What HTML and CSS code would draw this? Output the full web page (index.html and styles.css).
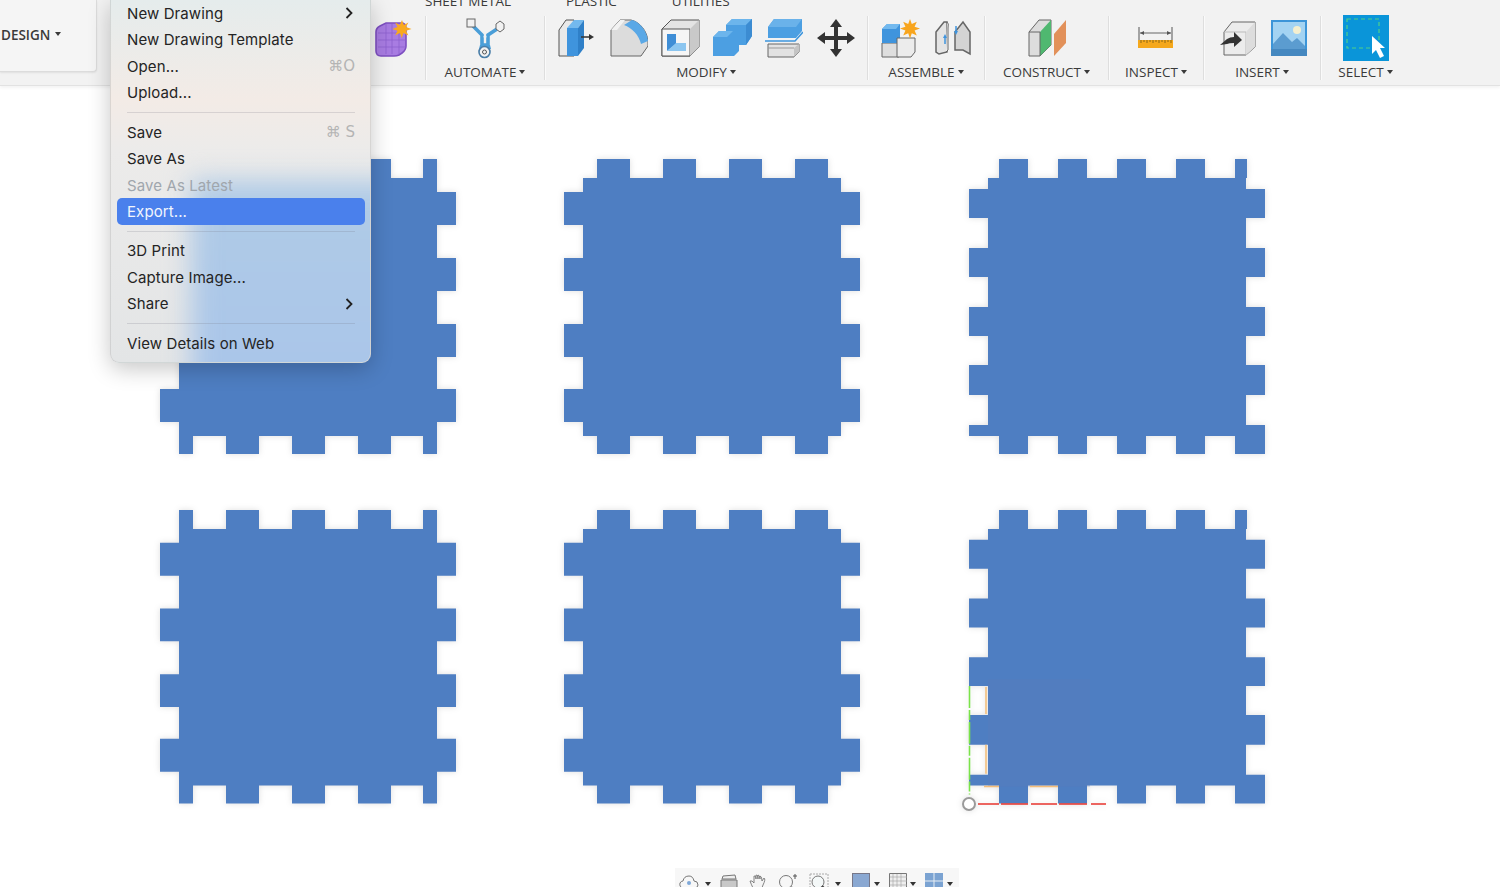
FILE: index.html
```html
<!DOCTYPE html>
<html lang="en">
<head>
<meta charset="utf-8">
<title>Design workspace</title>
<link rel="stylesheet" href="styles.css">
</head>
<body>
<svg class="defs" width="0" height="0" aria-hidden="true">
  <symbol id="panel-a" viewBox="0 0 296 296" preserveAspectRatio="none">
    <path d="M19 19H277V277H19Z M33 0H66V19H33Z M99 0H132V19H99Z M165 0H198V19H165Z M231 0H264V19H231Z M33 277H66V295H33Z M99 277H132V295H99Z M165 277H198V295H165Z M231 277H264V295H231Z M0 33H19V66H0Z M0 99H19V132H0Z M0 165H19V198H0Z M0 230H19V263H0Z M277 33H296V66H277Z M277 99H296V132H277Z M277 165H296V198H277Z M277 230H296V263H277Z"/>
  </symbol>
  <symbol id="panel-b" viewBox="0 0 296 296" preserveAspectRatio="none">
    <path d="M19 19H277V277H19Z M19 0H33V19H19Z M66 0H99V19H66Z M132 0H165V19H132Z M198 0H231V19H198Z M263 0H277V19H263Z M19 277H33V295H19Z M66 277H99V295H66Z M132 277H165V295H132Z M198 277H231V295H198Z M263 277H277V295H263Z M0 33H19V66H0Z M0 99H19V132H0Z M0 165H19V198H0Z M0 230H19V263H0Z M277 33H296V66H277Z M277 99H296V132H277Z M277 165H296V198H277Z M277 230H296V263H277Z"/>
  </symbol>
  <symbol id="panel-c" viewBox="0 0 296 296" preserveAspectRatio="none">
    <path d="M19 19H277V277H19Z M30 0H59V19H30Z M89 0H118V19H89Z M148 0H177V19H148Z M207 0H236V19H207Z M266 0H278V19H266Z M30 277H59V295H30Z M89 277H118V295H89Z M148 277H177V295H148Z M207 277H236V295H207Z M266 266H296V295H266Z M0 30H19V59H0Z M0 89H19V118H0Z M0 148H19V177H0Z M0 206H19V236H0Z M0 266H19V277H0Z M277 30H296V59H277Z M277 89H296V118H277Z M277 148H296V177H277Z M277 206H296V236H277Z"/>
  </symbol>
</svg>

<div class="app">
  <header class="toolbar">
    <div class="design-btn"><span class="caret-label design-label">DESIGN</span></div>
    <div class="ribbon">
      <div class="tabs">
        <span class="tab">SHEET METAL</span>
        <span class="tab">PLASTIC</span>
        <span class="tab">UTILITIES</span>
      </div>
      <div class="groups">
        <section class="group group-solid">
          <div class="icons">
            <svg width="38" height="38" viewBox="0 0 38 38"><path d="M1 13Q1 9 5 7L11 4H26Q31 4 31 9V27Q31 31 27 34L24 36Q22 37 19 37H6Q1 37 1 32Z" fill="#a87ce2" stroke="#7d4fc0" stroke-width="1.600"/><path d="M3 14H24V35M11 5V35M17 5V35M3 21H31M3 28H31M24 14L31 8" fill="none" stroke="#8a60cc" stroke-width=".7"/><path d="M27 1l1.800 5 4.600-2.600-2.400 4.600 5.500 2-5.500 1.800 2.400 4.800-4.900-2.500-1.800 5-1.800-5-4.800 2.500 2.400-4.800-5.300-1.800 5.300-2-2.400-4.600 4.700 2.600z" fill="#f9a91e"/></svg>
          </div>
        </section>
        <section class="group group-automate">
          <div class="icons">
            <svg width="40" height="42" viewBox="0 0 40 42"><path d="M8 9L17 18V28H23V18L32 12" fill="none" stroke="#4a9ed8" stroke-width="3.600"/><path d="M18.500 19H21.500L20 26Z" fill="#f2f2f2"/><path d="M15 28H25L26 32H14Z" fill="#4a9ed8"/><rect x="2" y="2" width="8" height="8" fill="#f2f2f2" stroke="#666"/><path d="M31 7l4-3 4 3v5l-4 3-4-3z" fill="#f2f2f2" stroke="#666"/><circle cx="19.500" cy="35" r="5.500" fill="#f2f2f2" stroke="#4a7ea8" stroke-width="1.600"/><circle cx="19.500" cy="35" r="2" fill="#f2f2f2" stroke="#555"/></svg>
          </div>
          <div class="caret-label">AUTOMATE</div>
        </section>
        <section class="group group-modify">
          <div class="icons">
            <svg width="38" height="40" viewBox="0 0 38 40"><path d="M1 38V12L8 2H16V38Z" fill="#e9e9e9" stroke="#555"/><path d="M9 10H20V38H9Z" fill="#3f94dd"/><path d="M9 10L16 2H26L20 10Z" fill="#73b9ee"/><path d="M20 10L26 2V30L20 38Z" fill="#2f80c8"/><path d="M23 19H32" stroke="#333" stroke-width="1.500"/><path d="M31 16L36 19L31 22Z" fill="#333"/></svg>
            <svg width="38" height="40" viewBox="0 0 38 40"><path d="M1 38V12L10 2H21C30 4 37 13 38 23V28L31 38Z" fill="#dcdcdc" stroke="#666"/><path d="M1 12L10 2H15L7 12Z" fill="#f2f2f2"/><path d="M14 7L22 2C30 4 37 13 38 23L31 26C29 17 22 10 14 7Z" fill="#5aa8e6"/></svg>
            <svg width="39" height="40" viewBox="0 0 39 40"><path d="M1 38V11L10 2H38V29L29 38Z" fill="#e4e4e4" stroke="#555"/><path d="M1 11H29V38H1Z" fill="#f6f6f6" stroke="#555"/><path d="M29 11L38 2V29L29 38Z" fill="#c9c9c9"/><path d="M6 16H15V26L6 33Z" fill="#3f8ed6"/><path d="M6 33L15 25H25V33Z" fill="#8cc6f0"/></svg>
            <svg width="39" height="40" viewBox="0 0 39 40"><path d="M0 38V19L6 13H13V7L19 1H39V18L33 27H26V33L21 38Z" fill="#4c9fe2"/><path d="M0 19L6 13H20L14 19Z M13 7L19 1H39L33 7Z" fill="#6cb5ec"/><path d="M33 7L39 1V18L33 27Z" fill="#3c8cd2"/></svg>
            <svg width="38" height="40" viewBox="0 0 38 40"><path d="M3 9L9 1H37V13L31 20H3Z" fill="#4c9fe2"/><path d="M3 9L9 1H37L31 9Z" fill="#6ab2ea"/><path d="M0 23H30L38 14" fill="none" stroke="#3c95dd" stroke-width="1.500"/><path d="M3 26H34V34L29 39H3Z" fill="#e2e2e2" stroke="#666"/><path d="M29 39V30L34 26V34Z" fill="#c4c4c4"/><path d="M3 30H29" stroke="#999"/></svg>
            <svg width="38" height="40" viewBox="0 0 38 40"><path d="M19 1L25 9H21V18H30V14L38 20L30 26V22H21V31H25L19 39L13 31H17V22H8V26L0 20L8 14V18H17V9H13Z" fill="#333"/></svg>
          </div>
          <div class="caret-label">MODIFY</div>
        </section>
        <section class="group group-assemble">
          <div class="icons">
            <svg width="39" height="40" viewBox="0 0 39 40"><path d="M1 25H18V39H1Z" fill="#dedede" stroke="#666"/><path d="M1 11L6 6H19V25H1Z" fill="#3f94dd"/><path d="M1 11L6 6H19L15 11Z" fill="#73b9ee"/><path d="M16 39V20H34V34L30 39Z" fill="#ececec" stroke="#666"/><path d="M29 1l1.800 5 5-2.200-2.200 5 5.400 1.800-5.400 2 2.200 5-5-2.400-1.800 5.400-1.800-5.400-5 2.400 2.200-5-5.400-2 5.400-1.800-2.200-5 5 2.200z" fill="#f8a51d"/></svg>
            <svg width="36" height="36" viewBox="0 0 36 36"><path d="M1 12L9 2H12V32L4 34L1 32Z" fill="#e4e4e4" stroke="#666" stroke-width="1.500"/><path d="M20 12L28 2L35 12V34L28 30H20Z" fill="#d4d4d4" stroke="#666" stroke-width="1.500"/><path d="M12 2Q14 3 13 8V30L11 32" fill="#f2f2f2" stroke="#666"/><path d="M21 6V12M10 24V18" stroke="#3f94dd" stroke-width="1.500"/><path d="M19 11H23L21 15ZM8 18H12L10 14Z" fill="#3f94dd"/></svg>
          </div>
          <div class="caret-label">ASSEMBLE</div>
        </section>
        <section class="group group-construct">
          <div class="icons">
            <svg width="38" height="38" viewBox="0 0 38 38"><path d="M1 13L11 1H23V26L12 37H1Z" fill="#ddd" stroke="#666"/><path d="M12 13L23 1V26L12 37Z" fill="#4fb870"/><path d="M1 13H12V37" fill="none" stroke="#666"/><path d="M26 15L38 1V24L26 37Z" fill="#e2915a"/></svg>
          </div>
          <div class="caret-label">CONSTRUCT</div>
        </section>
        <section class="group group-inspect">
          <div class="icons">
            <svg width="36" height="22" viewBox="0 0 36 22"><path d="M1 0V13M34 0V13" stroke="#555"/><path d="M2 6H33" stroke="#666"/><path d="M2 6L6 4V8ZM33 6L29 4V8Z" fill="#555"/><rect x="0" y="13" width="35" height="8" fill="#f5a81c"/><path d="M3 13v3M6 13v2M9 13v3M12 13v2M15 13v3M18 13v2M21 13v3M24 13v2M27 13v3M30 13v2M33 13v3" stroke="#8a6614"/></svg>
          </div>
          <div class="caret-label">INSPECT</div>
        </section>
        <section class="group group-insert">
          <div class="icons">
            <svg width="38" height="36" viewBox="0 0 38 36"><path d="M5 12L13 2H36V27L27 35H5Z" fill="#ececec" stroke="#666"/><path d="M5 12H27V35" fill="none" stroke="#bbb"/><path d="M27 12L36 2V27L27 35Z" fill="#ddd"/><path d="M1 25L8 19Q11 17 15 17V12L23 20L15 27V23Q10 23 8 24Z" fill="#333"/></svg>
            <svg width="36" height="36" viewBox="0 0 36 36"><rect width="36" height="36" fill="#3c95d8"/><rect x="2" y="2" width="32" height="32" fill="#a3d3f2"/><circle cx="26" cy="10" r="4" fill="#f4efcf"/><path d="M2 24L12 13L21 22L26 18L34 26V35H2Z" fill="#5b9cd0"/><path d="M0 29H36V36H0Z" fill="#4588c0"/></svg>
          </div>
          <div class="caret-label">INSERT</div>
        </section>
        <section class="group group-select">
          <div class="icons">
            <svg width="46" height="46" viewBox="0 0 46 46"><rect width="46" height="46" fill="#0a95d9"/><rect x="4" y="4" width="32" height="29" fill="none" stroke="#4fd08a" stroke-width="1.200" stroke-dasharray="4 3"/><path d="M29 21V39L33 35L37 43L41 41L37 33H42Z" fill="#fff"/></svg>
          </div>
          <div class="caret-label">SELECT</div>
        </section>
      </div>
    </div>
  </header>

  <main class="canvas">
    <div class="panel-grid">
      <svg class="panel"><use href="#panel-b"/></svg>
      <svg class="panel"><use href="#panel-a"/></svg>
      <svg class="panel"><use href="#panel-c"/></svg>
      <svg class="panel panel-low"><use href="#panel-b"/></svg>
      <svg class="panel panel-low"><use href="#panel-a"/></svg>
      <svg class="panel panel-low" viewBox="0 0 296 296" preserveAspectRatio="none">
        <use href="#panel-c" width="296" height="296"/>
        <rect x="19" y="170" width="102" height="108" fill="#5c7bba" opacity=".3"/>
        <path d="M17 178V205M17 236V265M15 278H30M61 278H89" fill="none" stroke="#f4bd78" stroke-width="1.500"/>
        <path d="M.5 177V286" stroke="#7be34a" stroke-width="1.600" stroke-dasharray="22 2 10 2"/>
        <path d="M9 295.500H30M32 295.500H59M62 295.500H88M90 295.500H118M122 295.500H137" stroke="#e8342e" stroke-width="1.400"/>
        <circle cx="0" cy="295.500" r="6" fill="#fff" stroke="#9a9a9a" stroke-width="2"/>
      </svg>
    </div>
  </main>

  <nav class="file-menu" aria-label="File">
    <div class="menu-item"><span>New Drawing</span><svg class="chev" width="8" height="12" viewBox="0 0 8 12"><path d="M1.500 1L6.500 6L1.500 11" fill="none" stroke="#222" stroke-width="1.800"/></svg></div>
    <div class="menu-item"><span>New Drawing Template</span></div>
    <div class="menu-item"><span>Open...</span><span class="shortcut">⌘O</span></div>
    <div class="menu-item"><span>Upload...</span></div>
    <div class="menu-sep"></div>
    <div class="menu-item"><span>Save</span><span class="shortcut">⌘ S</span></div>
    <div class="menu-item"><span>Save As</span></div>
    <div class="menu-item is-disabled"><span>Save As Latest</span></div>
    <div class="menu-item is-active"><span>Export...</span></div>
    <div class="menu-sep"></div>
    <div class="menu-item"><span>3D Print</span></div>
    <div class="menu-item"><span>Capture Image...</span></div>
    <div class="menu-item"><span>Share</span><svg class="chev" width="8" height="12" viewBox="0 0 8 12"><path d="M1.500 1L6.500 6L1.500 11" fill="none" stroke="#222" stroke-width="1.800"/></svg></div>
    <div class="menu-sep"></div>
    <div class="menu-item"><span>View Details on Web</span></div>
  </nav>

  <div class="nav-bar">
    <svg width="20" height="18" viewBox="0 0 20 18"><path d="M4 15Q0 14 1 10Q2 8 4 8Q5 3 10 3Q14 3 15 8Q19 8 19 12Q19 15 15 15Z" fill="none" stroke="#777"/><circle cx="10" cy="10" r="2" fill="#7fa8d8"/></svg><i class="nav-caret"></i>
    <svg class="gap-s" width="18" height="18" viewBox="0 0 18 18"><path d="M1 7H17V17H1Z" fill="#c8c8c8" stroke="#777"/><path d="M3 3L15 2L16 6H2Z" fill="#eee" stroke="#777"/></svg>
    <svg class="gap-m" width="18" height="18" viewBox="0 0 18 18"><path d="M5 17Q2 11 1 8Q3 7 5 10V3Q7 2 7 6V2Q9 1 9 6V2Q11 2 11 6V3Q13 3 13 8L15 5Q17 6 14 12Q13 15 12 17Z" fill="#f4f4f4" stroke="#777" stroke-width=".9"/></svg>
    <svg class="gap-m" width="20" height="18" viewBox="0 0 20 18"><circle cx="8" cy="9" r="6.500" fill="none" stroke="#777"/><path d="M13 14L18 18" stroke="#444" stroke-width="2"/><path d="M17 1V6M15 3H19" stroke="#555"/></svg>
    <svg class="gap-m" width="20" height="18" viewBox="0 0 20 18"><path d="M1 1H19V17H1Z" fill="none" stroke="#aaa" stroke-dasharray="2 1"/><circle cx="9" cy="9" r="6" fill="#f4f8f8" stroke="#777"/><path d="M13 13L18 18" stroke="#444" stroke-width="2"/></svg><i class="nav-caret"></i>
    <svg class="gap-m" width="18" height="18" viewBox="0 0 18 18"><rect x=".5" y=".5" width="17" height="17" fill="#8aa8d2" stroke="#778"/></svg><i class="nav-caret nav-caret-tight"></i>
    <svg class="gap-n" width="18" height="18" viewBox="0 0 18 18"><path d="M.5.500H17.500V17.500H.5Z" fill="#eee" stroke="#777"/><path d="M4 1V18M8 1V18M12 1V18M1 4H18M1 8H18M1 12H18" stroke="#aaa" stroke-width=".7"/></svg><i class="nav-caret nav-caret-tight"></i>
    <svg class="gap-n" width="18" height="18" viewBox="0 0 18 18"><path d="M0 0H18V18H0Z" fill="#7ba3d2"/><path d="M9 0V18M0 8H18" stroke="#e8eef4"/></svg><i class="nav-caret nav-caret-tight"></i>
  </div>
</div>
</body>
</html>
```

FILE: styles.css
```css
* {
  box-sizing: border-box;
}

html,
body {
  margin: 0;
  height: 887px;
  overflow: hidden;
  background: #fff;
}

.defs {
  display: block;
  height: 0;
}

.app {
  position: relative;
  height: 887px;
  overflow: hidden;
  font-family: "Open Sans", "Liberation Sans", sans-serif;
}

.toolbar {
  display: flex;
  height: 85px;
  background: #f2f2f2;
  box-shadow: 0 1px 0 #e2e2e2, 0 3px 3px rgba(0, 0, 0, 0.05);
  position: relative;
}

.design-btn {
  width: 97px;
  height: 72px;
  margin-right: 275px;
  display: flex;
  align-items: center;
  padding: 0 0 2px 1px;
  background: #f5f5f5;
  border: 1px solid #dcdcdc;
  border-left: 0;
  border-top: 0;
  border-radius: 0 0 4px 0;
  box-shadow: 0 1px 2px rgba(0, 0, 0, 0.08);
}

.ribbon {
  flex: 1;
  display: flex;
  flex-direction: column;
}

.tabs {
  height: 6px;
  overflow: hidden;
  display: flex;
  align-items: flex-end;
  gap: 55px;
  padding-left: 53px;
}

.tab {
  flex: none;
  font-size: 13.5px;
  line-height: 10px;
  height: 10px;
  color: #3a3a3a;
}

.groups {
  display: flex;
  margin-top: 10px;
  height: 64px;
}

.group {
  flex: none;
  display: flex;
  flex-direction: column;
  align-items: center;
  border-left: 1px solid #dedede;
  box-shadow: inset 1px 0 0 #fafafa;
}

.group-solid {
  width: 53px;
  border-left: 0;
  box-shadow: none;
  align-items: flex-start;
  padding-left: 3px;
}

.group-automate { width: 119px; }
.group-modify { width: 323px; }
.group-assemble { width: 117px; }
.group-construct { width: 124px; }
.group-inspect { width: 95px; }
.group-insert { width: 117px; }
.group-select { width: 90px; }

.icons {
  height: 44px;
  display: flex;
  align-items: center;
  flex: none;
}

.group-modify .icons {
  gap: 13.3px;
  padding-left: 1px;
}

.group-assemble .icons {
  gap: 15px;
}

.group-insert .icons {
  gap: 14px;
  padding-left: 2px;
}

.icons svg {
  flex: none;
  display: block;
}

.caret-label {
  margin-top: 4px;
  display: flex;
  align-items: center;
  gap: 3px;
  font-size: 13.5px;
  line-height: 16px;
  color: #3a3a3a;
  white-space: nowrap;
}

.caret-label::after {
  content: "";
  width: 0;
  height: 0;
  margin-top: -1px;
  border-left: 3.5px solid transparent;
  border-right: 3.5px solid transparent;
  border-top: 4px solid #3a3a3a;
}

.design-label {
  margin-top: 0;
  gap: 5px;
  font-size: 13.5px;
  font-weight: 600;
}

.canvas {
  padding: 74px 0 0 160px;
}

.panel-grid {
  display: grid;
  grid-template-columns: repeat(3, 296px);
  grid-auto-rows: 296px;
  column-gap: 108.4px;
  row-gap: 55px;
}

.panel {
  display: block;
  width: 296px;
  height: 296px;
  overflow: visible;
  fill: #4e7ec2;
  filter: drop-shadow(0 0 3px rgba(0, 0, 0, 0.13));
}

.panel-low {
  height: 294.5px;
}

.file-menu {
  position: absolute;
  top: 0;
  left: 110px;
  width: 261px;
  padding: 0.3px 5px 5px 6px;
  isolation: isolate;
  overflow: hidden;
  font-family: Inter, "Noto Sans", sans-serif;
  font-size: 15px;
  letter-spacing: 0.1px;
  color: #242424;
  border: 1px solid rgba(150, 150, 150, 0.25);
  border-top: 0;
  border-radius: 0 0 9px 9px;
  background: linear-gradient(
    180deg,
    #e5ecec 0,
    #f3ebe6 100px,
    #ecebea 150px,
    #e3e5e6 100%
  );
  box-shadow: 0 6px 22px rgba(0, 0, 0, 0.22);
}

/* the blurred panel seen through the frosted menu */
.file-menu::before {
  content: "";
  position: absolute;
  z-index: -1;
  left: 80px;
  top: 180px;
  right: -60px;
  bottom: -60px;
  background: linear-gradient(180deg, #b0cbe6, #a8c4ea);
  filter: blur(13px);
}

.menu-item {
  height: 26.4px;
  display: flex;
  align-items: center;
  justify-content: space-between;
  padding: 0 10px;
  border-radius: 5px;
}

.menu-item.is-active {
  background: #4a80ec;
  color: #f2f6fd;
}

.menu-item.is-disabled {
  color: #a0a6ad;
}

.shortcut {
  font-family: "DejaVu Sans", sans-serif;
  font-size: 15px;
  letter-spacing: 0;
  color: #b4b4b4;
}

.chev {
  display: block;
  margin-right: 2px;
}

.menu-sep {
  height: 13.2px;
  display: flex;
  align-items: center;
  padding: 0 10px;
}

.menu-sep::before {
  content: "";
  flex: 1;
  height: 1px;
  background: rgba(120, 120, 130, 0.22);
}

.nav-bar {
  position: absolute;
  left: 675px;
  bottom: 0;
  width: 284px;
  height: 19px;
  padding: 5px 0 0 4px;
  display: flex;
  align-items: flex-start;
  overflow: hidden;
  background: #f7f7f7;
}

.nav-bar svg {
  flex: none;
  display: block;
}

.nav-caret {
  flex: none;
  width: 0;
  height: 0;
  margin: 9px 0 0 6px;
  border-left: 3.5px solid transparent;
  border-right: 3.5px solid transparent;
  border-top: 4px solid #333;
}

.nav-caret-tight {
  margin-left: 3.5px;
}

.gap-s {
  margin-left: 9px;
}

.gap-m {
  margin-left: 11px;
}

.gap-n {
  margin-left: 9px;
}
```
